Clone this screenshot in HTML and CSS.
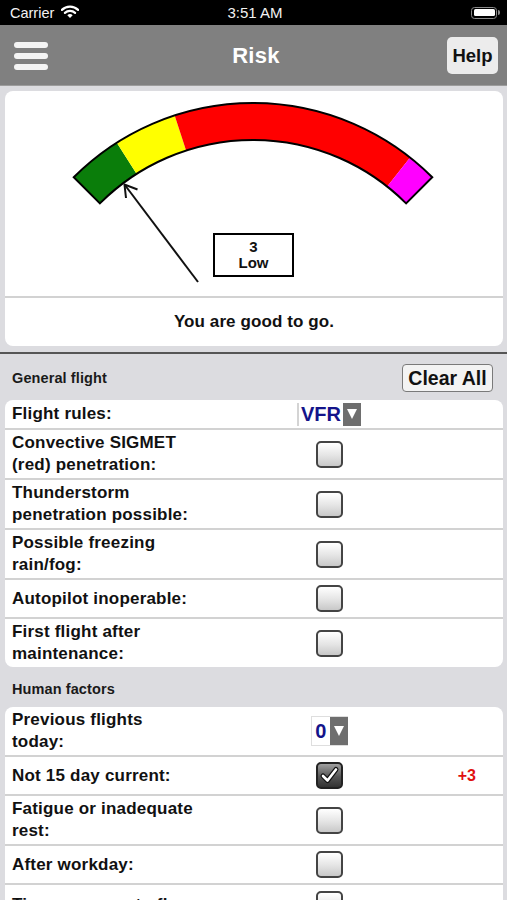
FILE: index.html
```html
<!DOCTYPE html>
<html lang="en">
<head>
<meta charset="utf-8">
<title>Risk</title>
<link rel="stylesheet" href="styles.css">
</head>
<body>
<div class="status">
  <div class="carrier">Carrier
    <svg class="wifi" width="18" height="14" viewBox="0 0 18 14">
      <path d="M0.9 4.9 A11.5 11.5 0 0 1 17.1 4.9" fill="none" stroke="#fff" stroke-width="2.2" stroke-linecap="round"/>
      <path d="M3.9 7.9 A7.3 7.3 0 0 1 14.1 7.9" fill="none" stroke="#fff" stroke-width="2.2" stroke-linecap="round"/>
      <path d="M9 13 L6.3 10.3 A3.8 3.8 0 0 1 11.7 10.3 Z" fill="#fff"/>
    </svg>
  </div>
  <div class="time">3:51 AM</div>
  <div class="battery"><span class="batt-body"><span class="batt-fill"></span></span><span class="batt-nub"></span></div>
</div>

<header class="nav">
  <div class="menu"><span></span><span></span><span></span></div>
  <div class="title">Risk</div>
  <button class="help">Help</button>
</header>

<main class="page">
  <section class="gauge-card">
    <div class="gauge">
      <svg class="gauge-svg" width="498" height="205" viewBox="0 0 498 205">
        <path d="M68.75 86.25 A253.5 253.5 0 0 1 111.8 51.7 L131.7 82.9 A216.5 216.5 0 0 0 94.9 112.4 Z" fill="#0a7d0a"/>
        <path d="M111.8 51.7 A253.5 253.5 0 0 1 169.67 24.4 L181.1 59.6 A216.5 216.5 0 0 0 131.7 82.9 Z" fill="#ffff00"/>
        <path d="M169.67 24.4 A253.5 253.5 0 0 1 405.1 66.55 L382.2 95.6 A216.5 216.5 0 0 0 181.1 59.6 Z" fill="#ff0000"/>
        <path d="M405.1 66.55 A253.5 253.5 0 0 1 427.25 86.25 L401.1 112.4 A216.5 216.5 0 0 0 382.2 95.6 Z" fill="#ff00ff"/>
        <path d="M68.75 86.25 A253.5 253.5 0 0 1 427.25 86.25 L401.1 112.4 A216.5 216.5 0 0 0 94.9 112.4 Z" fill="none" stroke="#000" stroke-width="2" stroke-linejoin="miter"/>
        <line x1="193" y1="191" x2="119.5" y2="93.5" stroke="#111" stroke-width="2"/>
        <polyline points="132.5,98.5 119.5,93.5 121,107" fill="none" stroke="#111" stroke-width="2"/>
      </svg>
      <div class="score"><span>3</span><span>Low</span></div>
    </div>
    <div class="message">You are good to go.</div>
  </section>

  <div class="rule"></div>

  <div class="section-head">
    <span class="section-title">General flight</span>
    <button class="clear">Clear All</button>
  </div>

  <div class="table">
    <div class="row row-select">
      <div class="label">Flight rules:</div>
      <div class="control"><div class="select wide"><span class="val">VFR</span><span class="arrow"></span></div></div>
      <div class="points"></div>
    </div>
    <div class="row">
      <div class="label">Convective SIGMET<br>(red) penetration:</div>
      <div class="control"><span class="check"></span></div>
      <div class="points"></div>
    </div>
    <div class="row">
      <div class="label">Thunderstorm<br>penetration possible:</div>
      <div class="control"><span class="check"></span></div>
      <div class="points"></div>
    </div>
    <div class="row">
      <div class="label">Possible freezing<br>rain/fog:</div>
      <div class="control"><span class="check"></span></div>
      <div class="points"></div>
    </div>
    <div class="row">
      <div class="label">Autopilot inoperable:</div>
      <div class="control"><span class="check"></span></div>
      <div class="points"></div>
    </div>
    <div class="row">
      <div class="label">First flight after<br>maintenance:</div>
      <div class="control"><span class="check"></span></div>
      <div class="points"></div>
    </div>
  </div>

  <div class="section-head hf">
    <span class="section-title">Human factors</span>
  </div>

  <div class="table">
    <div class="row">
      <div class="label">Previous flights<br>today:</div>
      <div class="control"><div class="select small"><span class="val">0</span><span class="arrow"></span></div></div>
      <div class="points"></div>
    </div>
    <div class="row">
      <div class="label">Not 15 day current:</div>
      <div class="control"><span class="check on">
        <svg width="23" height="23" viewBox="0 0 23 23"><path d="M5 12 L9.5 16.5 L18 5.5" fill="none" stroke="#111" stroke-width="5" stroke-linecap="round" stroke-linejoin="round"/><path d="M5 12 L9.5 16.5 L18 5.5" fill="none" stroke="#fff" stroke-width="2.6" stroke-linecap="round" stroke-linejoin="round"/></svg>
      </span></div>
      <div class="points">+3</div>
    </div>
    <div class="row">
      <div class="label">Fatigue or inadequate<br>rest:</div>
      <div class="control"><span class="check"></span></div>
      <div class="points"></div>
    </div>
    <div class="row">
      <div class="label">After workday:</div>
      <div class="control"><span class="check"></span></div>
      <div class="points"></div>
    </div>
    <div class="row">
      <div class="label">Time pressure to fly:</div>
      <div class="control"><span class="check"></span></div>
      <div class="points"></div>
    </div>
  </div>
</main>
</body>
</html>
```

FILE: styles.css
```css
* { box-sizing: border-box; }

html, body {
  margin: 0;
  padding: 0;
}

body {
  background: #dcdce0;
  font-family: "Liberation Sans", Arial, sans-serif;
  color: #111;
  width: 507px;
  overflow-x: hidden;
}

/* status bar */
.status {
  height: 25px;
  background: #000;
  color: #fff;
  display: grid;
  grid-template-columns: 1fr auto 1fr;
  align-items: center;
  padding: 0 7px 0 10px;
  font-size: 14.5px;
}

.carrier {
  display: flex;
  align-items: center;
  gap: 7px;
  color: #f2f2f2;
}

.wifi { display: block; margin-top: -1px; }

.time {
  font-size: 15px;
  color: #f2f2f2;
}

.battery {
  justify-self: end;
  display: flex;
  align-items: center;
}

.batt-body {
  width: 26px;
  height: 12px;
  border: 1.5px solid #8a8a8a;
  border-radius: 3.5px;
  padding: 1.5px;
  display: block;
}

.batt-fill {
  display: block;
  width: 100%;
  height: 100%;
  background: #fff;
  border-radius: 1.5px;
}

.batt-nub {
  width: 2px;
  height: 5px;
  background: #8a8a8a;
  border-radius: 0 2px 2px 0;
  margin-left: 1px;
}

/* nav bar */
.nav {
  height: 61px;
  background: #808080;
  border-bottom: 1px solid #9c9c9c;
  display: grid;
  grid-template-columns: 1fr auto 1fr;
  align-items: center;
  padding: 0 9px 0 14px;
}

.menu {
  display: flex;
  flex-direction: column;
  gap: 5px;
  width: 34px;
  margin-top: 2px;
}

.menu span {
  display: block;
  height: 6px;
  background: #f4f4f4;
  border-radius: 3px;
}

.title {
  color: #fff;
  font-weight: bold;
  font-size: 22px;
  letter-spacing: 0.3px;
  margin-top: 2px;
}

.help {
  justify-self: end;
  width: 51px;
  height: 37px;
  border: none;
  border-radius: 5px;
  background: #ececec;
  font-family: "Liberation Sans", Arial, sans-serif;
  font-weight: bold;
  font-size: 18.5px;
  color: #111;
  padding: 0;
  margin-top: 1px;
}

/* page */
.page {
  padding-bottom: 40px;
}

.gauge-card {
  margin: 5px 4px 0 5px;
  background: #fff;
  border-radius: 8px;
  overflow: hidden;
}

.gauge {
  position: relative;
  height: 205px;
}

.gauge-svg { display: block; }

.score {
  position: absolute;
  left: 208px;
  top: 142px;
  width: 81px;
  height: 44px;
  border: 2px solid #000;
  display: flex;
  flex-direction: column;
  align-items: center;
  justify-content: center;
  font-weight: bold;
  font-size: 15px;
  line-height: 16px;
  background: #fff;
}

.message {
  border-top: 2px solid #d2d2d2;
  height: 50px;
  display: flex;
  align-items: center;
  justify-content: center;
  font-weight: bold;
  font-size: 17px;
  letter-spacing: 0.1px;
}

.rule {
  margin-top: 6px;
  height: 2px;
  background: #555;
}

.section-head {
  display: flex;
  align-items: center;
  justify-content: space-between;
  padding: 10px 14px 8px 12px;
  height: 46px;
}

.section-head.hf {
  height: 40px;
  padding: 4px 14px 0 12px;
}

.section-title {
  font-weight: bold;
  font-size: 14.5px;
  letter-spacing: 0.1px;
  color: #1a1a1a;
}

.clear {
  width: 91px;
  height: 28px;
  border: 1px solid #7a7a7a;
  border-radius: 4px;
  background: #f3f3f3;
  font-family: "Liberation Sans", Arial, sans-serif;
  font-weight: bold;
  font-size: 19.5px;
  color: #111;
  padding: 0;
}

.table {
  margin: 0 4px 0 5px;
  background: #fff;
  border-radius: 8px;
  overflow: hidden;
}

.row {
  display: flex;
  align-items: center;
  min-height: 39px;
  padding: 2px 0 2px 7px;
  border-bottom: 2px solid #d2d2d2;
}

.row:last-child { border-bottom: none; }

.row-select {
  min-height: 30px;
  padding: 0 0 0 7px;
  align-items: stretch;
}

.label {
  width: 285px;
  font-weight: bold;
  font-size: 17px;
  line-height: 22px;
  letter-spacing: 0.2px;
  color: #111;
}

.row-select .label {
  display: flex;
  align-items: center;
}

.control {
  width: 64px;
  display: flex;
  justify-content: center;
  align-items: center;
}

.points {
  flex: 1;
  text-align: right;
  padding-right: 27px;
  font-weight: bold;
  font-size: 16px;
  color: #e01010;
}

.select {
  display: flex;
  align-items: stretch;
  background: #fff;
}

.select .val {
  display: flex;
  align-items: center;
  font-weight: bold;
  font-size: 20px;
  color: #14148a;
}

.select .arrow {
  display: flex;
  align-items: center;
  justify-content: center;
  background: #6e6e6e;
}

.select .arrow::after {
  content: "";
  width: 0;
  height: 0;
  border-left: 5.5px solid transparent;
  border-right: 5.5px solid transparent;
  border-top: 10px solid #fff;
}

.select.wide {
  width: 64px;
  border-left: 2px solid #d4d4d4;
}

.select.wide .val {
  width: 44px;
  padding-left: 2px;
}

.select.wide .arrow { width: 18px; }

.select.small {
  width: 37px;
  height: 30px;
  border: 1px solid #dedede;
  border-right: none;
  margin-left: 1px;
}

.select.small .val {
  width: 18px;
  justify-content: center;
}

.select.small .arrow { width: 19px; }

.check {
  display: flex;
  align-items: center;
  justify-content: center;
  width: 27px;
  height: 27px;
  border: 2px solid #444;
  border-radius: 5px;
  background: linear-gradient(#ffffff, #e4e4e4 55%, #c8c8c8);
}

.check.on {
  background: linear-gradient(#a0a0a0, #555 55%, #333);
  border-color: #222;
}

.check svg { display: block; }
```
